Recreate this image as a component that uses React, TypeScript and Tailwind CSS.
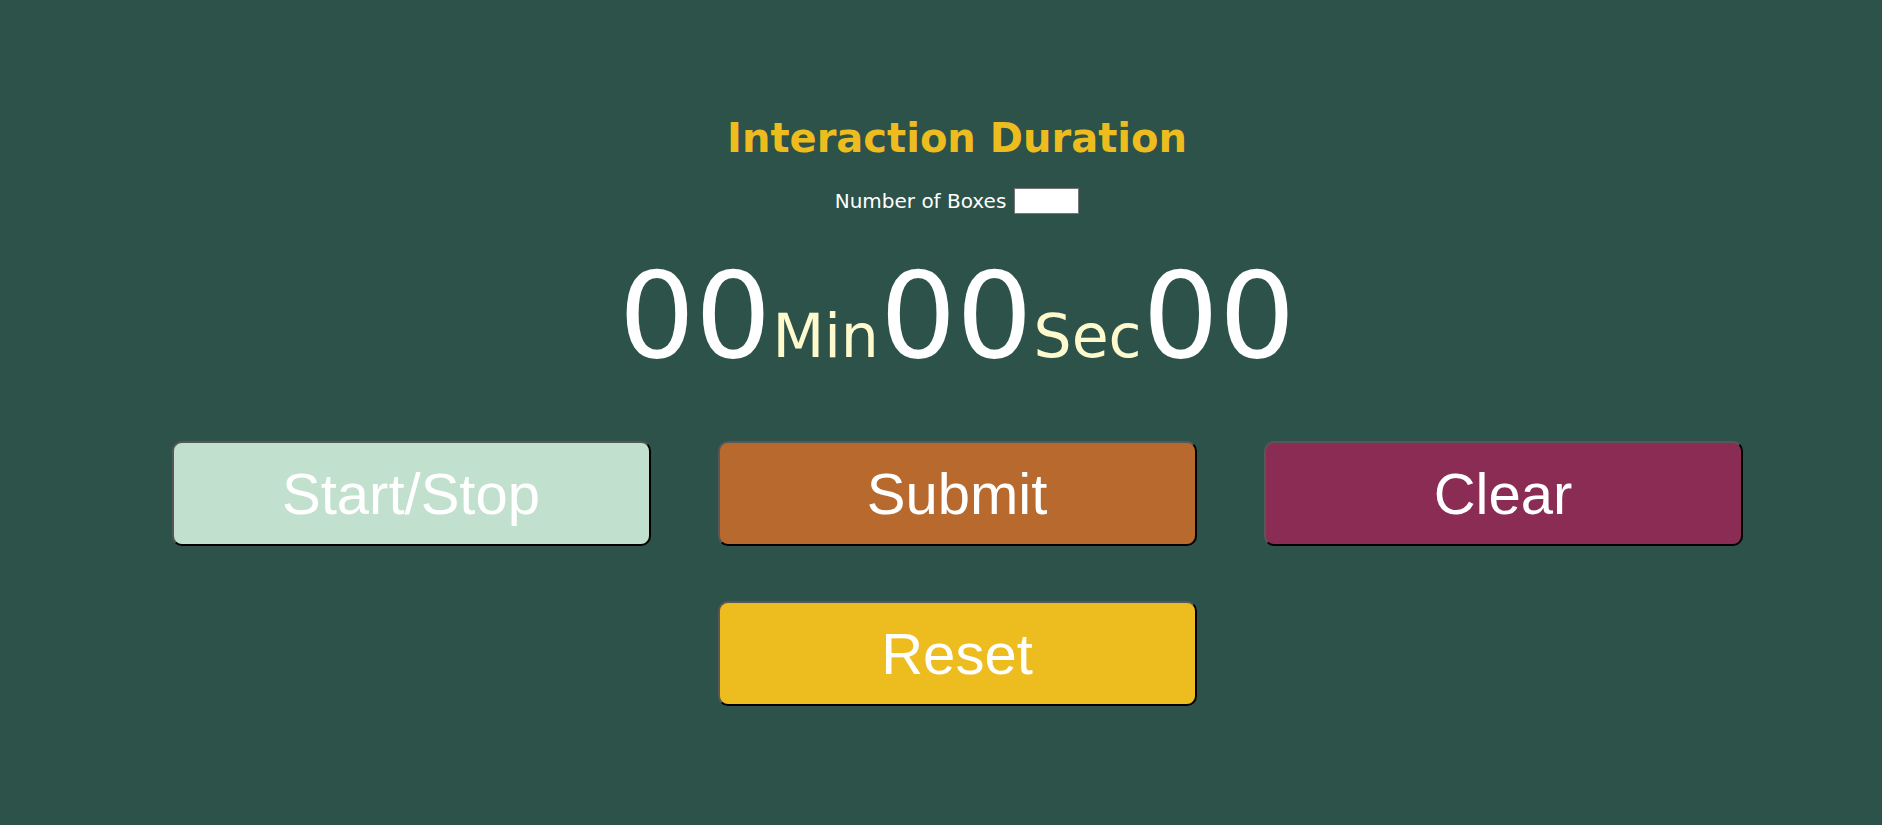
import React from "react";

const dv = { fontFamily: '"DejaVu Sans", Verdana, sans-serif' };

function Btn({ label, bg }: { label: string; bg: string }) {
  return (
    <button
      className={`h-[105px] w-[479px] rounded-[10px] border-2 border-t-[#575757] border-l-[#575757] border-b-black border-r-black text-[58px] leading-none text-white ${bg}`}
      style={{ fontFamily: '"Liberation Sans", Arial, sans-serif' }}
    >
      {label}
    </button>
  );
}

export default function App() {
  return (
    <div className="flex min-h-screen flex-col items-center bg-[#2c5249] pl-[32px] pt-[114px]" style={dv}>
      <h1 className="text-[40px] font-bold leading-[48px] text-[#edbc1f]">
        Interaction Duration
      </h1>

      <div className="mt-[26px] flex h-[26px] items-center">
        <span className="text-[20px] leading-[26px] text-white">Number of Boxes</span>
        <input
          type="text"
          className="ml-[8px] h-[26px] w-[65px] border border-[#767676] bg-white"
        />
      </div>

      <div className="mt-[42px] flex items-baseline leading-none">
        <span className="text-[120px] text-white">00</span>
        <span className="mx-[1px] text-[60px] text-[#fffacd]">Min</span>
        <span className="text-[120px] text-white">00</span>
        <span className="mx-[1px] text-[60px] text-[#fffacd]">Sec</span>
        <span className="text-[120px] text-white">00</span>
      </div>

      <div className="mt-[65px] flex gap-[67px]">
        <Btn label="Start/Stop" bg="bg-[#c2e0ce]" />
        <Btn label="Submit" bg="bg-[#b8692e]" />
        <Btn label="Clear" bg="bg-[#8b2c55]" />
      </div>

      <div className="mt-[55px]">
        <Btn label="Reset" bg="bg-[#edbc1f]" />
      </div>
    </div>
  );
}
